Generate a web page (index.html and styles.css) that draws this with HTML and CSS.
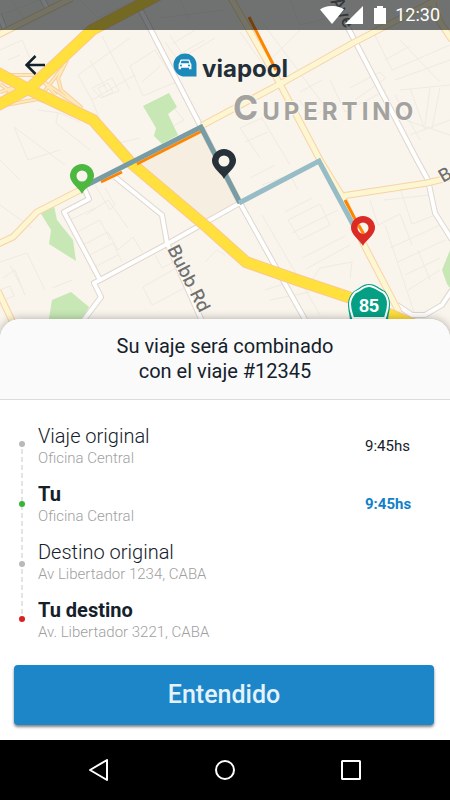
FILE: index.html
```html
<!DOCTYPE html>
<html lang="es">
<head>
<meta charset="utf-8">
<meta name="viewport" content="width=device-width, initial-scale=1">
<title>viapool</title>
<link rel="stylesheet" href="styles.css">
</head>
<body>
<div class="screen">
  <section class="map">
    <svg class="map-art" viewBox="0 0 450 345" preserveAspectRatio="xMidYMin slice" aria-hidden="true">
      <!-- parcels -->
      <g class="parcels">
        <path d="M78 75L130 38M78 75L92 100L135 75M90 60L108 92M92 88L112 78L119 91L101 98ZM98 88L108 83L113 92L103 97ZM102 36L130 90M130 66L155 50L176 82L143 96ZM142 82L160 66M165 42L178 60L215 38M170 35L186 60M172 44L195 30M178 55L205 40M0 50L22 40L30 58M8 60L20 55M92 100L110 145L140 138M38 110L60 113L80 122M14 127L28 160L60 150M14 127L65 165M58 112L56 123L90 150M174 108L184 120L170 128M0 205L32 228M0 160L20 180"/>
        <path d="M86 215L108 200L128 228M95 185L110 210L115 205L105 188M70 220L95 208M77 232L100 220L110 240M83 245L108 232L118 250M88 256L113 243L122 262M93 268L118 255M118 250L133 237L142 252M0 262L27 253L45 290M3 278L15 270L25 295M10 265L22 288M0 290L10 286L14 296L4 300M52 288L72 280M143 287L190 260M143 287L152 305L190 285M155 255L162 268L185 256M205 262L217 250L225 255"/>
        <path d="M240 32L260 60M262 22L335 120M270 60L300 30M300 92L322 80M300 100L310 118L330 106M330 80L345 112L386 90M350 88L380 72L386 78L355 100M400 40L440 82M375 35L392 70L450 45M385 60L410 46M395 80L450 60M400 90L450 85M395 95L420 140M410 88L425 130M430 88L425 125M440 88L432 128M405 120L450 135M410 135L450 120M240 128L260 158M240 128L262 118L290 165M245 142L268 132"/>
        <path d="M250 178L275 165M262 185L290 175L298 190M288 220L320 204L330 225L300 240ZM285 212L312 198M292 233L338 210M302 258L345 236M306 269L350 245M312 280L320 268L352 262L350 278M370 200L378 225L400 214L412 245M385 225L420 330M384 200L430 195M400 188L412 224L438 214M390 248L440 225M398 262L445 240M405 275L440 258M408 290L440 270M418 250L430 280M262 215L320 315M265 290L290 282M270 300L310 292M0 15L40 0M12 0L28 25M80 0L98 18L130 2M160 18L225 10M180 0L190 20M290 0L300 25L360 10M380 0L402 22"/>
      </g>
      <!-- parks -->
      <g class="parks">
        <path d="M143 106L169 93L177 107L168 114L178 135L162 144L154 136L156 128Z"/>
        <path d="M40 212L54 206L57 220L73 240L76 261L49 244L51 230Z"/>
        <path d="M52 300L71 292L89 307L80 325L48 325Z"/>
        <path d="M450 250L442 270L447 284L450 288Z"/>
      </g>
      <path class="district" d="M130 163L201 129L238 202L200 223Z"/>
      <!-- freeway ramps -->
      <g class="ramp-edge">
        <path d="M8 75L34 75L48 85L82 108M0 102L18 84M0 92L12 88L24 94M0 106L38 99L58 106M67 60L58 78L61 90L82 108M62 68L44 92M40 78L56 95M0 84L14 94"/>
      </g>
      <g class="ramp-fill">
        <path d="M8 75L34 75L48 85L82 108M0 102L18 84M0 92L12 88L24 94M0 106L38 99L58 106M67 60L58 78L61 90L82 108M62 68L44 92M40 78L56 95M0 84L14 94"/>
      </g>
      <!-- white streets -->
      <g class="street-edge">
        <path d="M138 5L201 127L240 203L308 325M42 -2L48 10M-1 15L6 32M345 22L417 160L428 180L435 213L452 240M84 188L89 199L64 212L100 280L94 283L101 297L80 325M100 280L167 244L240 203M115 177L162 215L167 243L206 330M397 305L412 315L425 315L442 305L452 290"/>
      </g>
      <g class="street-fill">
        <path d="M138 5L201 127L240 203L308 325M42 -2L48 10M-1 15L6 32M345 22L417 160L428 180L435 213L452 240M84 188L89 199L64 212L100 280L94 283L101 297L80 325M100 280L167 244L240 203M115 177L162 215L167 243L206 330M397 305L412 315L425 315L442 305L452 290"/>
      </g>
      <!-- main avenues -->
      <g class="avenue-edge">
        <path d="M-2 35L72 -2M201 126L280 84L353 43L436 0M432 2L440 22L452 40M231 -2L280 84L320 160L342 196L363 243L399 312M342 196L427 183L452 177M80 190L37 212L13 237L-2 244M-2 291L14 325"/>
      </g>
      <g class="avenue-fill">
        <path d="M-2 35L72 -2M201 126L280 84L353 43L436 0M432 2L440 22L452 40M231 -2L280 84L320 160L342 196L363 243L399 312M342 196L427 183L452 177M80 190L37 212L13 237L-2 244M-2 291L14 325"/>
      </g>
      <!-- freeways -->
      <g class="freeway-edge">
        <path d="M160 -6L92 30L30 88L-4 106M-4 72L30 90L93 120L131 163L208 228L246 262L300 281L348 297L415 325"/>
      </g>
      <g class="freeway-fill">
        <path d="M160 -6L92 30L30 88L-4 106M-4 72L30 90L93 120L131 163L208 228L246 262L300 281L348 297L415 325"/>
      </g>
      <!-- traffic -->
      <path class="traffic" d="M101 182L122 172M137 164L202 131M249 17L276 70M345 200L364 236"/>
      <!-- route -->
      <path class="route route-main" d="M81 188L201 127L240 203"/>
      <path class="route route-rest" d="M239 203L319 161L363 243"/>
      <!-- place names -->
      <text class="city" x="233" y="120"><tspan class="city-initial">C</tspan>UPERTINO</text>
      <text class="street-name" transform="translate(167 249) rotate(63)">Bubb Rd</text>
      <text class="street-name" transform="translate(330 1) rotate(62)">Ave</text>
      <text class="street-name" transform="translate(443 183) rotate(-30)">B</text>
      <!-- state route shield -->
      <path class="shield" d="M369 284C376 284 380 289 385 291C388 295 390 299 390 304C390 311 388 315 388 322L350 322C350 315 348 311 348 304C348 299 350 295 354 291C359 289 362 284 369 284Z"/>
      <path class="shield-line" d="M369 286C375 286 379 291 383.500 292.500C387 296 388 300 388 304C388 310 386 314 385 318L353 318C352 314 350 310 350 304C350 300 352 296 355 292.500C360 291 363 286 369 286Z"/>
      <text class="shield-number" x="369" y="312">85</text>
      <!-- pins -->
      <g class="pin pin-green" transform="translate(82 194)"><path d="M0 0C-2 -5 -12 -11 -12 -18A12 12 0 0 1 12 -18C12 -11 2 -5 0 0Z"/><circle cy="-18" r="5.500"/></g>
      <g class="pin pin-dark" transform="translate(224 179)"><path d="M0 0C-2 -5 -12 -11 -12 -18A12 12 0 0 1 12 -18C12 -11 2 -5 0 0Z"/><circle cy="-18" r="5.500"/></g>
      <g class="pin pin-red" transform="translate(363 246)"><path d="M0 0C-2 -5 -12 -11 -12 -18A12 12 0 0 1 12 -18C12 -11 2 -5 0 0Z"/><circle cy="-18" r="5.500"/><path class="hole-traffic" d="M-4.500 -21L0.500 -12.500"/></g>
    </svg>

    <div class="status-bar">
      <svg width="66" height="18" viewBox="0 0 66 18" aria-hidden="true" fill="#fff">
        <path d="M0 3.500C6.500 -1.200 17.500 -1.200 24 3.500L12 18Z"/>
        <path d="M43 0V18H25Z"/>
        <path d="M54 2H57V0H63V2H66V18H54Z"/>
      </svg>
      <span class="clock">12:30</span>
    </div>

    <header class="app-bar">
      <button class="back" type="button" aria-label="Volver">
        <svg width="20" height="20" viewBox="0 0 20 20" aria-hidden="true"><path d="M20 10H2M10.500 1L1.500 10L10.500 19"/></svg>
      </button>
      <div class="brand">
        <svg width="24" height="24" viewBox="0 0 24 24" aria-hidden="true">
          <path fill="#1b8abb" d="M12 0.500A11.500 11.500 0 0 1 23.500 12V23.500H12A11.500 11.500 0 0 1 12 0.500Z"/>
          <path fill="#fff" fill-rule="evenodd" d="M8.300 6.500H15.700C16.200 6.500 16.500 6.700 16.700 7.200L17.700 10.300C18.200 10.600 18.400 11 18.400 11.600V16.200H16V14.800H8V16.200H5.600V11.600C5.600 11 5.800 10.600 6.300 10.300L7.300 7.200C7.500 6.700 7.800 6.500 8.300 6.500ZM8.500 7.700L7.600 10.200H16.400L15.500 7.700ZM8 11.400A1 1 0 1 0 8 13.400A1 1 0 1 0 8 11.400ZM16 11.400A1 1 0 1 0 16 13.400A1 1 0 1 0 16 11.400Z"/>
        </svg>
        <span class="brand-name">viapool</span>
      </div>
    </header>
  </section>

  <main class="sheet">
    <h1 class="sheet-title">Su viaje será combinado<br>con el viaje #12345</h1>
    <div class="trip">
      <svg class="rail" width="8" height="200" viewBox="0 0 8 200" aria-hidden="true">
        <path d="M4 25V194" stroke="#dcdcdc" stroke-width="1.500" stroke-dasharray="5 3"/>
        <circle cx="4" cy="20" r="3" fill="#b9b9b9"/>
        <circle cx="4" cy="80" r="3" fill="#34b536"/>
        <circle cx="4" cy="140" r="3" fill="#b9b9b9"/>
        <circle cx="4" cy="195" r="3" fill="#dc2020"/>
      </svg>
      <ol class="stops">
        <li class="stop">
          <div class="place"><span class="name">Viaje original</span><span class="address">Oficina Central</span></div>
          <time class="time">9:45hs</time>
        </li>
        <li class="stop own">
          <div class="place"><span class="name">Tu</span><span class="address">Oficina Central</span></div>
          <time class="time">9:45hs</time>
        </li>
        <li class="stop">
          <div class="place"><span class="name">Destino original</span><span class="address">Av Libertador 1234, CABA</span></div>
        </li>
        <li class="stop own">
          <div class="place"><span class="name">Tu destino</span><span class="address">Av. Libertador 3221, CABA</span></div>
        </li>
      </ol>
    </div>
    <button class="confirm" type="button">Entendido</button>
  </main>

  <nav class="nav-bar" aria-label="Sistema">
    <button type="button" aria-label="Atrás"><svg width="22" height="22" viewBox="0 0 22 22" aria-hidden="true"><path d="M19 1V21L2 11Z"/></svg></button>
    <button type="button" aria-label="Inicio"><svg width="22" height="22" viewBox="0 0 22 22" aria-hidden="true"><circle cx="11" cy="11" r="9"/></svg></button>
    <button type="button" aria-label="Recientes"><svg width="22" height="22" viewBox="0 0 22 22" aria-hidden="true"><rect x="2" y="2" width="18" height="18" rx="0.500"/></svg></button>
  </nav>
</div>
</body>
</html>
```
FILE: styles.css
```css
* {
  box-sizing: border-box;
}

body {
  margin: 0;
  font-family: Roboto, "Liberation Sans", sans-serif;
  color: #14212b;
  background: #fff;
}

button {
  margin: 0;
  padding: 0;
  border: 0;
  background: none;
  font: inherit;
  color: inherit;
  cursor: pointer;
}

svg {
  display: block;
}

.screen {
  display: flex;
  flex-direction: column;
  min-height: 100vh;
}

/* Map */

.map {
  position: relative;
  flex: 1 0 240px;
  margin-bottom: -24px;
  overflow: hidden;
  background: #f9f4ec;
}

.map-art {
  position: absolute;
  inset: 0;
  width: 100%;
  height: 100%;
  fill: none;
}

.parcels {
  stroke: #efeae2;
  stroke-width: 1;
}

.parks {
  fill: #c7e8b5;
}

.district {
  fill: #f6eee0;
}

.ramp-edge {
  stroke: #f9cf9d;
  stroke-width: 4;
}

.ramp-fill {
  stroke: #fdeab8;
  stroke-width: 2;
}

.street-edge {
  stroke: #ded7cf;
  stroke-width: 6;
  stroke-linejoin: round;
}

.street-fill {
  stroke: #fff;
  stroke-width: 4;
  stroke-linejoin: round;
}

.avenue-edge {
  stroke: #f8d3a4;
  stroke-width: 7;
}

.avenue-fill {
  stroke: #fdf6d2;
  stroke-width: 5;
}

.freeway-edge {
  stroke: #fbc98b;
  stroke-width: 12;
  stroke-linejoin: round;
}

.freeway-fill {
  stroke: #ffe03c;
  stroke-width: 10;
  stroke-linejoin: round;
}

.traffic {
  stroke: #ff8400;
  stroke-width: 3;
}

.route {
  stroke-width: 5;
}

.route-main {
  stroke: #789ca3;
}

.route-rest {
  stroke: #96bcc6;
}

.city {
  font: 700 24px Inter, sans-serif;
  letter-spacing: 4px;
  fill: #a3a29f;
  stroke: #fbf8f2;
  stroke-width: 2px;
  paint-order: stroke;
}

.city-initial {
  font-size: 34px;
}

.street-name {
  font: 500 18px Inter, sans-serif;
  fill: #70706f;
  stroke: #fbf8f2;
  stroke-width: 2px;
  paint-order: stroke;
}

.shield {
  fill: #05a084;
}

.shield-line {
  stroke: #fff;
  stroke-width: 2;
}

.shield-number {
  font: 700 18px "Liberation Sans", sans-serif;
  text-anchor: middle;
  fill: #fff;
}

.pin circle {
  fill: #f9f4ec;
}

.pin-green {
  fill: #4cb840;
}

.pin-dark {
  fill: #273139;
}

.pin-red {
  fill: #dc2b25;
}

.hole-traffic {
  stroke: #ff8400;
  stroke-width: 3;
}

/* Bars over the map */

.status-bar {
  position: relative;
  display: flex;
  align-items: center;
  justify-content: flex-end;
  gap: 9px;
  height: 30px;
  padding-right: 10px;
  background: rgba(5, 12, 16, 0.56);
  color: #fff;
}

.clock {
  font-size: 18px;
  line-height: 20px;
  font-weight: 400;
}

.app-bar {
  position: relative;
  display: grid;
  grid-template-columns: 1fr auto 1fr;
  align-items: center;
  height: 70px;
  padding: 0 14px 0 25px;
}

.back {
  justify-self: start;
}

.back path {
  fill: none;
  stroke: #14212b;
  stroke-width: 2.5;
}

.brand {
  display: flex;
  align-items: center;
  gap: 5px;
}

.brand-name {
  padding-top: 8px;
  font: 700 24px/28px Inter, sans-serif;
  color: #222e38;
}

/* Trip sheet */

.sheet {
  position: relative;
  border-radius: 20px 20px 0 0;
  background: #fff;
  box-shadow: 0 0 10px rgba(0, 0, 0, 0.3);
}

.sheet-title {
  margin: 0;
  padding: 15px 16px;
  border-bottom: 1px solid #dcdcdc;
  border-radius: 20px 20px 0 0;
  background: #fafafa;
  font-size: 20px;
  line-height: 25px;
  font-weight: 400;
  text-align: center;
}

.trip {
  display: flex;
  gap: 12px;
  padding: 24px 0 23px 18px;
}

.stops {
  flex: 1;
  display: flex;
  flex-direction: column;
  gap: 14px;
  margin: 0;
  padding: 0;
  list-style: none;
}

.stop {
  display: grid;
  grid-template-columns: 1fr 85px;
  align-items: center;
}

.place {
  display: flex;
  flex-direction: column;
}

.name {
  font-size: 20px;
  line-height: 24px;
  font-weight: 300;
}

.address {
  font-size: 15px;
  line-height: 20px;
  font-weight: 300;
  color: #a0a0a0;
}

.time {
  font-size: 15px;
  line-height: 20px;
}

.own .name {
  font-weight: 700;
}

.own .time {
  font-weight: 700;
  color: #137fc8;
}

.rail {
  flex: none;
  margin-bottom: -24px;
}

.confirm {
  display: block;
  width: calc(100% - 30px);
  height: 60px;
  margin: 0 16px 15px 14px;
  border-radius: 4px;
  background: #1c86c9;
  box-shadow: 0 2px 3px rgba(0, 0, 0, 0.5);
  color: #e4f2fb;
  font-size: 25px;
  line-height: 30px;
  font-weight: 500;
}

/* System navigation */

.nav-bar {
  position: relative;
  display: grid;
  grid-template-columns: repeat(3, 1fr);
  height: 60px;
  padding: 0 36px;
  background: #000;
}

.nav-bar button {
  display: grid;
  place-items: center;
}

.nav-bar svg {
  fill: none;
  stroke: #fff;
  stroke-width: 2;
  stroke-linejoin: round;
}
```
